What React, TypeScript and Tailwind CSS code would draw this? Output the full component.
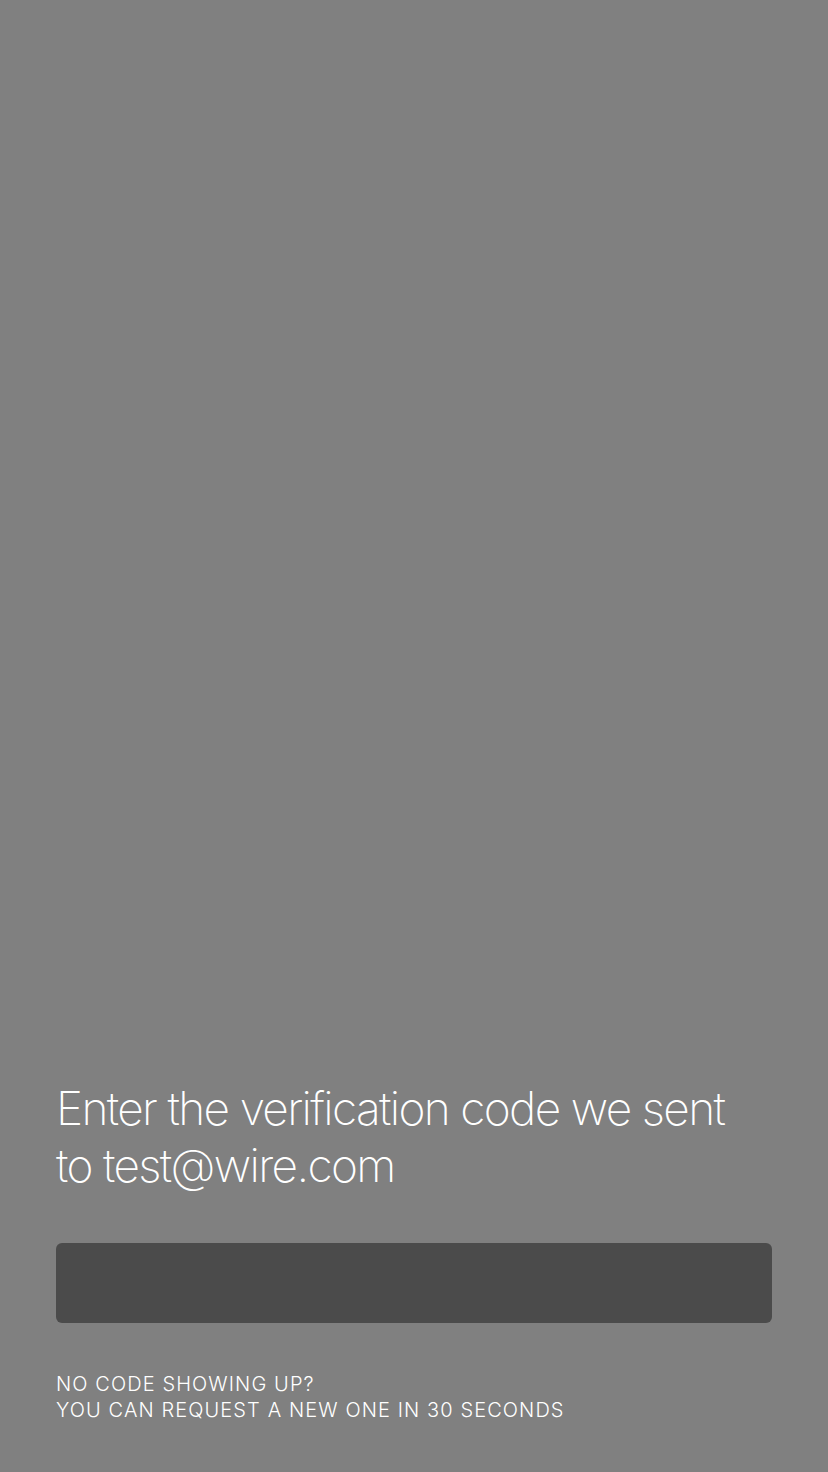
export default function App() {
  return (
    <div
      className="flex h-[1472px] w-full flex-col justify-end bg-[#808080] px-14 pb-[49px] text-white"
      style={{ fontFamily: 'Inter, "Noto Sans", sans-serif' }}
    >
      <h1 className="max-w-[700px] text-[46px] font-extralight leading-[57px] tracking-[-1.65px]">
        Enter the verification code we sent to test@wire.com
      </h1>

      <div className="mt-[49px] h-20 w-full rounded-md bg-[#4b4b4b]" />

      <div className="mt-[48px] text-[20px] font-light leading-[26px] tracking-[1.1px]">
        <p>NO CODE SHOWING UP?</p>
        <p>YOU CAN REQUEST A NEW ONE IN 30 SECONDS</p>
      </div>
    </div>
  );
}
